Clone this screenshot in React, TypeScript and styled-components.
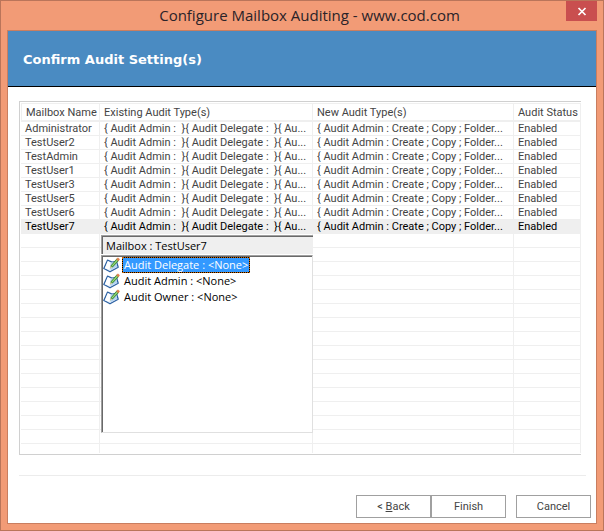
import React from 'react';
import styled, { createGlobalStyle } from 'styled-components';

const uiFont = 'Roboto, "Liberation Sans", Arial, sans-serif';
const listFont = '"Open Sans", "Noto Sans", sans-serif';

const GlobalStyle = createGlobalStyle`
  * { box-sizing: border-box; }
  body { margin: 0; }
`;

const Window = styled.div`
  min-height: 100vh;
  display: flex;
  flex-direction: column;
  padding: 0 6px 6px;
  border: 1px solid #ba755a;
  background: #f29b76;
  font-family: ${uiFont};
  font-size: 11px;
  line-height: 13px;
  color: #444;
`;

const TitleBar = styled.header`
  display: flex;
  align-items: flex-start;
  height: 29px;
`;

const WindowTitle = styled.h1`
  flex: 1;
  margin: 0;
  padding-left: 46px;
  font: 400 15px/29px "Open Sans", "Noto Sans", sans-serif;
  text-align: center;
  color: #2a2329;
`;

const CloseButton = styled.button`
  display: grid;
  place-items: center;
  width: 31px;
  height: 20px;
  padding: 0;
  border: 0;
  background: #c94f4f;
  color: #fff;
`;

const Body = styled.main`
  flex: 1;
  display: flex;
  flex-direction: column;
  border: 1px solid #c97e60;
  background: #fff;
`;

const Banner = styled.div`
  display: flex;
  align-items: center;
  height: 56px;
  padding: 2px 15px 0;
  border-bottom: 1px solid #000;
  background: #4a8bc2;
`;

const BannerTitle = styled.h2`
  margin: 0;
  font: 700 13px/18px "DejaVu Sans", Verdana, sans-serif;
  color: #fff;
`;

const Grid = styled.div`
  position: relative;
  margin: 14px 15px 0 11px;
  padding: 1px 0 1px 1px;
  border: solid #d0d0d0;
  border-width: 1px 0 1px 1px;
`;

const Table = styled.table`
  width: 100%;
  table-layout: fixed;
  border-collapse: separate;
  border-spacing: 0;
`;

const Col = styled.col<{ $width?: number }>`
  width: ${(p) => (p.$width ? `${p.$width}px` : 'auto')};
`;

const HeadCell = styled.th`
  height: 19px;
  padding: 1px 0 0 4px;
  border: solid #efefef;
  border-width: 1px 1px 2px 0;
  font-weight: 400;
  text-align: left;
  white-space: nowrap;

  &:first-child {
    border-left-width: 1px;
  }
`;

const Row = styled.tr<{ $selected?: boolean }>`
  background: ${(p) => (p.$selected ? '#efefef' : 'transparent')};
  color: ${(p) => (p.$selected ? '#000' : '#444')};
`;

const Cell = styled.td`
  height: 14px;
  padding: 1px 0 0 4px;
  border: solid #efefef;
  border-width: 0 1px 1px 0;
  line-height: 12px;
  white-space: pre;
  overflow: hidden;
`;

const LastCell = styled(Cell)`
  height: 9px;
  border-bottom-width: 0;
`;

const Popup = styled.section`
  position: absolute;
  top: 133px;
  left: 81px;
  display: flex;
  flex-direction: column;
  width: 212px;
  height: 198px;
  background: #fff;
  font: 11px/15px ${listFont};
  color: #000;
`;

const PopupTitle = styled.h3`
  margin: 0;
  height: 19px;
  padding: 1px 0 0 4px;
  border: solid #a0a0a0;
  border-width: 1px 0 0 1px;
  box-shadow: inset 1px 1px #696969;
  background: #efefef;
  font: inherit;
  line-height: 17px;
`;

const PopupList = styled.ul`
  flex: 1;
  margin: 1px 0 0;
  padding: 1px 0 0 1px;
  list-style: none;
  border: 1px solid #e0e0e0;
  border-top-color: #a0a0a0;
  border-left-color: #a0a0a0;
  box-shadow: inset 1px 1px #696969;
`;

const PopupItem = styled.li`
  display: flex;
  align-items: center;
  gap: 2px;
  height: 16px;
`;

const ItemButton = styled.button<{ $selected?: boolean }>`
  height: 16px;
  padding: 0 1px;
  border: 1px ${(p) => (p.$selected ? 'dotted #cc6600' : 'solid transparent')};
  background: ${(p) =>
    p.$selected
      ? 'linear-gradient(#39f, #39f) padding-box, linear-gradient(#000, #000) border-box'
      : 'transparent'};
  color: ${(p) => (p.$selected ? '#fff' : '#000')};
  font: 11px/14px ${listFont};
`;

const Separator = styled.hr`
  width: auto;
  height: 1px;
  margin: 20px 10px 0 11px;
  border: 0;
  background: #ececec;
`;

const Footer = styled.footer`
  display: flex;
  justify-content: flex-end;
  gap: 10px;
  margin: 19px 5px 4px;
`;

const ButtonPair = styled.div`
  display: flex;
`;

const Button = styled.button`
  width: 75px;
  height: 23px;
  padding: 0;
  border: 1px solid #a0a0a0;
  background: #fff;
  color: #444;
  font: 11px/13px ${uiFont};
`;

function CloseIcon() {
  return (
    <svg width="10" height="9" viewBox="0 0 10 9" aria-hidden="true">
      <path d="M1.500 1l7 7M8.500 1l-7 7" stroke="currentColor" strokeWidth="1.700" fill="none" />
    </svg>
  );
}

function EditIcon() {
  return (
    <svg width="17" height="16" viewBox="0 0 17 16" aria-hidden="true">
      <path
        d="M4.500 3.200L.8 11.500l2 1 4.200 2.300 8.200-4.600-1.700-5.700L9 5.200z"
        fill="#e4effa"
        stroke="#2d62a3"
        strokeWidth="1.300"
        strokeLinejoin="round"
      />
      <path d="M4.800 4l2.800 1.600-1.300 7.200-4.300-1.600z" fill="#fff" />
      <path d="M7.600 5.600l5.400-.6 1.200 4.600-6.500 3.600z" fill="#b4d3f1" />
      <path d="M7 11.400l1-3.200L13.800 1.600l2.200 1.900L10 10z" fill="#35852f" />
      <path d="M8.500 8.700L14 2.600l.9.800-5.500 6z" fill="#9bdc7c" />
      <path d="M13.200 2.300L14.900.4l2 1.900-1.500 1.900z" fill="#e07f4b" />
      <path d="M7 11.400l.8-2.500 1.500 1.500z" fill="#f0d9a8" />
    </svg>
  );
}

const mailboxes = [
  'Administrator',
  'TestUser2',
  'TestAdmin',
  'TestUser1',
  'TestUser3',
  'TestUser5',
  'TestUser6',
  'TestUser7',
];
const existingTypes = '{ Audit Admin :  }{ Audit Delegate :  }{ Au...';
const newTypes = '{ Audit Admin : Create ; Copy ; Folder...';
const details = ['Audit Delegate : <None>', 'Audit Admin : <None>', 'Audit Owner : <None>'];
const headings = ['Mailbox Name', 'Existing Audit Type(s)', 'New Audit Type(s)', 'Audit Status'];
const emptyRows = 15;

export default function App() {
  const selected = 'TestUser7';
  return (
    <>
      <GlobalStyle />
      <Window>
        <TitleBar>
          <WindowTitle>Configure Mailbox Auditing - www.cod.com</WindowTitle>
          <CloseButton type="button" aria-label="Close">
            <CloseIcon />
          </CloseButton>
        </TitleBar>
        <Body>
          <Banner>
            <BannerTitle>Confirm Audit Setting(s)</BannerTitle>
          </Banner>
          <Grid>
            <Table>
              <colgroup>
                <Col $width={79} />
                <Col $width={213} />
                <Col />
                <Col $width={67} />
              </colgroup>
              <thead>
                <tr>
                  {headings.map((h) => (
                    <HeadCell key={h} scope="col">{h}</HeadCell>
                  ))}
                </tr>
              </thead>
              <tbody>
                {mailboxes.map((name) => (
                  <Row key={name} $selected={name === selected}>
                    <Cell>{name}</Cell>
                    <Cell>{existingTypes}</Cell>
                    <Cell>{newTypes}</Cell>
                    <Cell>Enabled</Cell>
                  </Row>
                ))}
                {Array.from({ length: emptyRows }, (_, i) => (
                  <Row key={i}>
                    <Cell /><Cell /><Cell /><Cell />
                  </Row>
                ))}
                <Row>
                  <LastCell /><LastCell /><LastCell /><LastCell />
                </Row>
              </tbody>
            </Table>
            <Popup aria-labelledby="popup-title">
              <PopupTitle id="popup-title">Mailbox : {selected}</PopupTitle>
              <PopupList>
                {details.map((d, i) => (
                  <PopupItem key={d}>
                    <EditIcon />
                    <ItemButton type="button" $selected={i === 0}>{d}</ItemButton>
                  </PopupItem>
                ))}
              </PopupList>
            </Popup>
          </Grid>
          <Separator />
          <Footer>
            <ButtonPair>
              <Button type="button">&lt; <u>B</u>ack</Button>
              <Button type="button">Finish</Button>
            </ButtonPair>
            <Button type="button">Cancel</Button>
          </Footer>
        </Body>
      </Window>
    </>
  );
}
